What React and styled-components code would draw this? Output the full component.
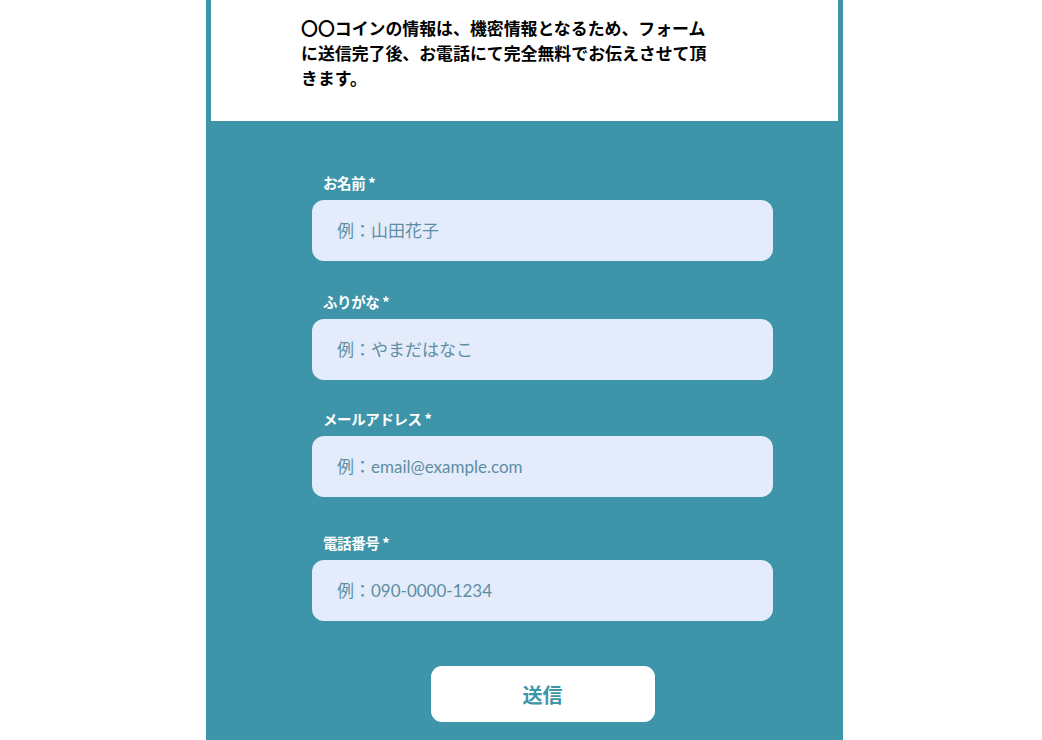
import React from "react";
import styled, { createGlobalStyle } from "styled-components";

const Global = createGlobalStyle`
  html, body {
    margin: 0;
    padding: 0;
    background: #ffffff;
  }
  body {
    font-family: "Noto Sans CJK JP", sans-serif;
  }
`;

const Page = styled.div`
  display: flex;
  justify-content: center;
  padding-left: 7px;
  height: 740px;
  overflow: hidden;
`;

const Column = styled.div`
  width: 637px;
  background: #3e94a9;
  display: flex;
  flex-direction: column;
`;

const Notice = styled.div`
  margin: 0 5px;
  background: #ffffff;
  height: 121px;
  box-sizing: border-box;
  padding: 17px 0 0 90px;
`;

const NoticeText = styled.p`
  margin: 0;
  width: 418px;
  font-family: "Liberation Sans", "Noto Sans CJK JP", sans-serif;
  font-weight: 700;
  font-size: 16.9px;
  line-height: 25px;
  color: #000000;
`;

const Form = styled.form`
  display: flex;
  flex-direction: column;
  align-items: center;
  padding: 52px 0 0 36px;
`;

const Field = styled.div`
  width: 461px;
  display: flex;
  flex-direction: column;
  margin-top: ${(p) => p.$gap || 0}px;
`;

const Label = styled.label`
  font-family: "Noto Sans CJK JP", sans-serif;
  font-weight: 700;
  font-size: 14.5px;
  line-height: 20px;
  color: #ffffff;
  padding-left: 11px;
  margin-bottom: 7px;
  letter-spacing: -0.4px;
`;

const Input = styled.input`
  height: 61px;
  box-sizing: border-box;
  border: none;
  border-radius: 12px;
  background: #e4ebfa;
  padding: 0 25px;
  font-family: "Lato", "Noto Sans CJK JP", sans-serif;
  font-size: 17px;
  color: #2d5f72;
  outline: none;
  &::placeholder {
    color: #5d8fa4;
    opacity: 1;
  }
`;

const Submit = styled.button`
  margin-top: 45px;
  width: 224px;
  height: 56px;
  border: none;
  border-radius: 11px;
  background: #ffffff;
  color: #3e94a9;
  font-family: "Noto Sans CJK JP", sans-serif;
  font-weight: 700;
  font-size: 20px;
  cursor: pointer;
`;

const fields = [
  { label: "お名前 *", placeholder: "例：山田花子", type: "text", gap: 0 },
  { label: "ふりがな *", placeholder: "例：やまだはなこ", type: "text", gap: 31 },
  { label: "メールアドレス *", placeholder: "例：email@example.com", type: "email", gap: 29 },
  { label: "電話番号 *", placeholder: "例：090-0000-1234", type: "tel", gap: 36 },
];

export default function App() {
  return (
    <>
      <Global />
      <Page>
        <Column>
          <Notice>
            <NoticeText>
              〇〇コインの情報は、機密情報となるため、フォームに送信完了後、お電話にて完全無料でお伝えさせて頂きます。
            </NoticeText>
          </Notice>
          <Form onSubmit={(e) => e.preventDefault()}>
            {fields.map((f) => (
              <Field key={f.label} $gap={f.gap}>
                <Label>{f.label}</Label>
                <Input type={f.type} placeholder={f.placeholder} />
              </Field>
            ))}
            <Submit type="submit">送信</Submit>
          </Form>
        </Column>
      </Page>
    </>
  );
}
